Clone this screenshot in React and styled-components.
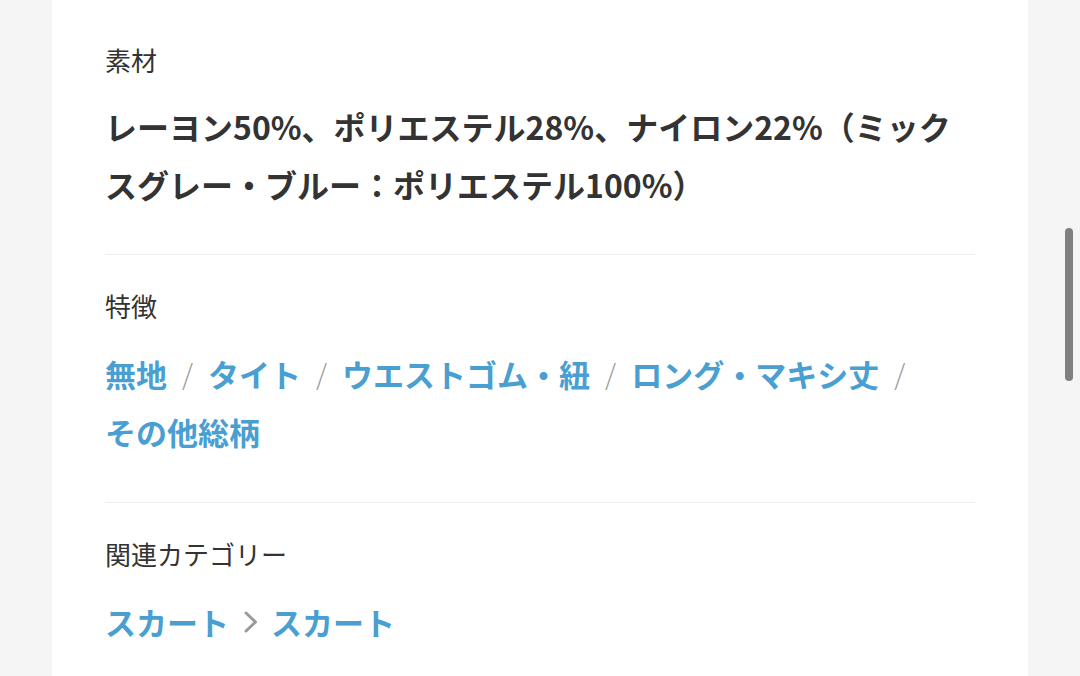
import React from "react";
import styled, { createGlobalStyle } from "styled-components";

const Global = createGlobalStyle`
  html, body { margin: 0; padding: 0; background: #f5f5f5; }
  body { font-family: "Noto Sans CJK JP", "Noto Sans", sans-serif; color: #333; }
`;

const Page = styled.div`
  position: relative;
  width: 1080px;
  height: 676px;
  overflow: hidden;
  background: #f5f5f5;
  display: flex;
  justify-content: center;
`;

const Card = styled.div`
  width: 976px;
  background: #fff;
  padding: 9px 53px 0;
  box-sizing: border-box;
`;

const Section = styled.section`
  padding: 31px 0 41px;
  border-bottom: ${(p) => (p.$last ? "none" : "1px solid #eeeeee")};
`;

const Label = styled.div`
  font-size: 26px;
  line-height: 39px;
  font-weight: 400;
  color: #333;
  margin-bottom: 18px;
`;

const Value = styled.div`
  font-size: 32px;
  line-height: 58px;
  font-weight: 700;
  color: #333;
`;

const TagList = styled.div`
  display: flex;
  flex-wrap: wrap;
  align-items: center;
  padding: 2px 0 1px;
  font-size: 31px;
  line-height: 57.5px;
  font-weight: 700;
`;

const Item = styled.span`
  display: inline-flex;
  align-items: center;
`;

const Link = styled.a`
  color: #4a9fd2;
  text-decoration: none;
`;

const Sep = styled.span`
  font-size: 28px;
  font-weight: 300;
  color: #9a9a9a;
  margin: 0 15px;
`;

const Chevron = styled.svg`
  width: 16px;
  height: 24px;
  margin: 0 12px 0 14px;
`;

const Scrollbar = styled.div`
  position: absolute;
  right: 7px;
  top: 228px;
  width: 8px;
  height: 153px;
  border-radius: 4px;
  background: #7f7f7f;
`;

const tags = ["無地", "タイト", "ウエストゴム・紐", "ロング・マキシ丈", "その他総柄"];

export default function App() {
  return (
    <Page>
      <Global />
      <Card>
        <Section>
          <Label>素材</Label>
          <Value>
            レーヨン50%、ポリエステル28%、ナイロン22%（ミックスグレー・ブルー：ポリエステル100%）
          </Value>
        </Section>
        <Section>
          <Label>特徴</Label>
          <TagList>
            {tags.map((t, i) => (
              <Item key={t}>
                <Link href="#">{t}</Link>
                {i < tags.length - 1 && <Sep>/</Sep>}
              </Item>
            ))}
          </TagList>
        </Section>
        <Section $last>
          <Label>関連カテゴリー</Label>
          <TagList>
            <Link href="#">スカート</Link>
            <Chevron viewBox="0 0 16 24">
              <polyline points="3,3 12.5,12 3,21" fill="none" stroke="#9a9a9a" strokeWidth="3" strokeLinecap="round" strokeLinejoin="round" />
            </Chevron>
            <Link href="#">スカート</Link>
          </TagList>
        </Section>
      </Card>
      <Scrollbar />
    </Page>
  );
}
